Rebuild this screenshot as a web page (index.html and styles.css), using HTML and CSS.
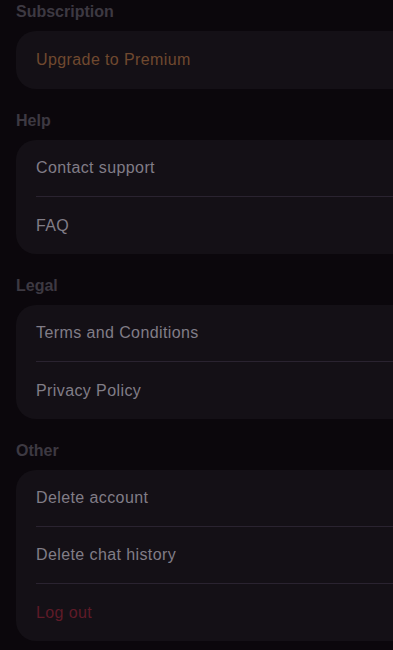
FILE: index.html
```html
<!DOCTYPE html>
<html lang="en">
<head>
	<meta charset="UTF-8">
	<title>Settings</title>
	<link rel="stylesheet" href="styles.css">
</head>
<body>
	<div class="settings">
		<div class="group">
			<div class="label">Subscription</div>
			<div class="card">
				<div class="row premium">Upgrade to Premium</div>
			</div>
		</div>
		<div class="group">
			<div class="label">Help</div>
			<div class="card">
				<div class="row">Contact support</div>
				<div class="row">FAQ</div>
			</div>
		</div>
		<div class="group">
			<div class="label">Legal</div>
			<div class="card">
				<div class="row">Terms and Conditions</div>
				<div class="row">Privacy Policy</div>
			</div>
		</div>
		<div class="group">
			<div class="label">Other</div>
			<div class="card">
				<div class="row">Delete account</div>
				<div class="row">Delete chat history</div>
				<div class="row logout">Log out</div>
			</div>
		</div>
	</div>
</body>
</html>
```

FILE: styles.css
```css
html, body {
	margin: 0;
	padding: 0;
	background: #0b070c;
	overflow: hidden;
}
body {
	font-family: "Liberation Sans", Arial, sans-serif;
}
.settings {
	padding: 3px 0 0 16px;
	margin-right: -40px;
}
.group {
	margin-bottom: 23px;
}
.label {
	font-size: 16px;
	font-weight: bold;
	color: #3d3942;
	line-height: 18px;
	margin-bottom: 10px;
}
.card {
	background: #141016;
	border-radius: 20px;
	padding-left: 20px;
}
.row {
	font-size: 16px;
	letter-spacing: 0.4px;
	color: #817d87;
	height: 56px;
	line-height: 56px;
	border-bottom: 1px solid #2a2330;
}
.row:last-child {
	border-bottom: none;
	height: 57px;
	line-height: 57px;
}
.row:only-child {
	height: 58px;
	line-height: 58px;
}
.premium {
	color: #70492f;
}
.logout {
	color: #5f1b28;
}
```
